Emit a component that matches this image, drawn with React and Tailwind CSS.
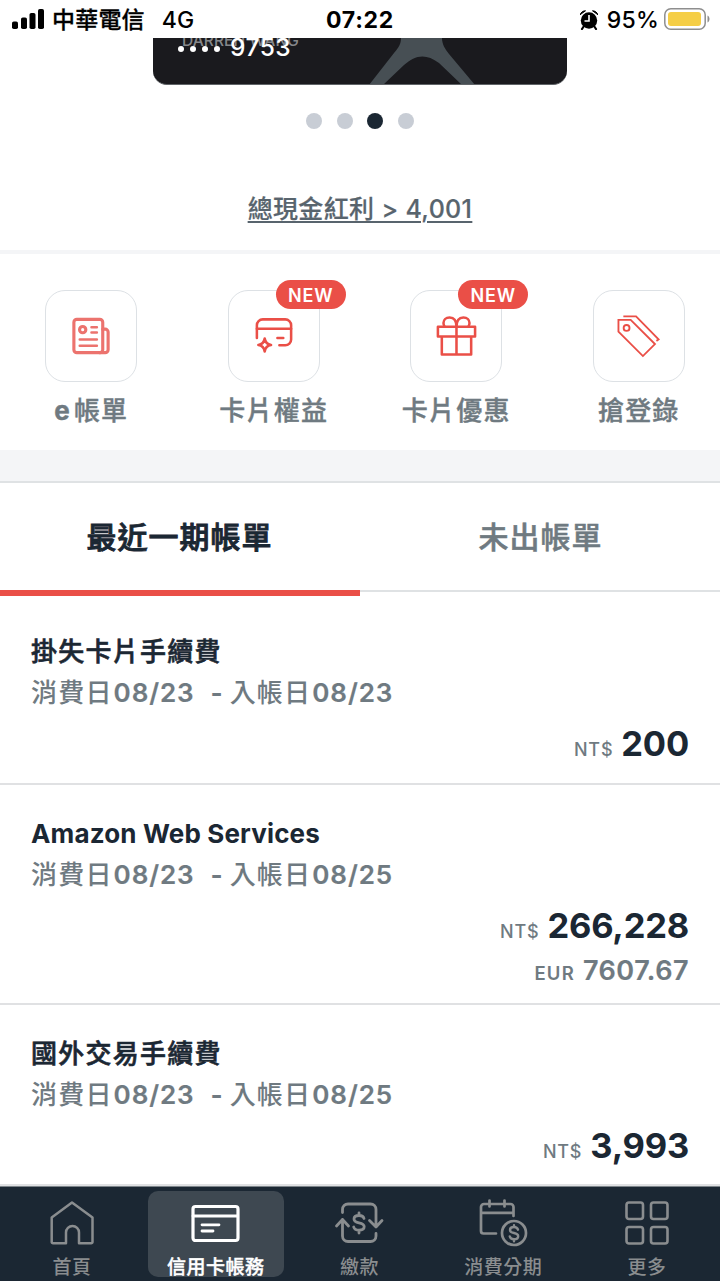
const shortcuts = [
  { label: "帳單", prefix: "e", icon: BillIcon },
  { label: "卡片權益", icon: BenefitIcon, isNew: true },
  { label: "卡片優惠", icon: GiftIcon, isNew: true },
  { label: "搶登錄", icon: TagIcon },
];

const transactions = [
  { name: "掛失卡片手續費", spent: "08/23", posted: "08/23", amount: "200", box: "h-[193px] pt-[39px]", title: "font-medium tracking-[1.25px] [-webkit-text-stroke:0.6px]" },
  { name: "Amazon Web Services", spent: "08/23", posted: "08/25", amount: "266,228", foreign: "7607.67", box: "h-[220px] pt-7", title: "font-bold tracking-[0.15px]" },
  { name: "國外交易手續費", spent: "08/23", posted: "08/25", amount: "3,993", box: "h-[181px] pt-7", title: "font-medium tracking-[1.25px] [-webkit-text-stroke:0.6px]" },
];

const navItems = [
  { label: "首頁", icon: HomeIcon },
  { label: "信用卡帳務", icon: CardIcon, active: true },
  { label: "繳款", icon: PayIcon },
  { label: "消費分期", icon: InstallmentIcon },
  { label: "更多", icon: MoreIcon },
];

function BillIcon() {
  return (
    <svg width="92" height="92" viewBox="0 0 92 92" fill="none" stroke="#ec736e" strokeWidth="3.2" strokeLinecap="round" strokeLinejoin="round">
      <rect x="28.5" y="29" width="29.5" height="34" rx="3" />
      <path d="M58 39h2.5a3 3 0 0 1 3 3v18a3 3 0 0 1-3 3H55" />
      <circle cx="37.500" cy="39.500" r="3.200" />
      <path d="M46.500 37h5.500M46.500 42.500h5.500M34.500 49.500h17.500M34.500 56h17.500" strokeWidth="2.600" />
    </svg>
  );
}

function BenefitIcon() {
  return (
    <svg width="92" height="92" viewBox="0 0 92 92" fill="none" stroke="#ea4f47" strokeWidth="2.6" strokeLinecap="round" strokeLinejoin="round">
      <path d="M28.500 48V35a6 6 0 0 1 6-6h23a6 6 0 0 1 6 6V49.500a6 6 0 0 1-6 6H51.500" />
      <path d="M28.500 38.500h35M49.500 48h6" />
      <path d="M36.500 48.500c.6 4 2.500 6 6.500 6.700c-4 .6-5.900 2.600-6.500 6.600c-.6-4-2.500-6-6.500-6.600c4-.7 5.900-2.700 6.500-6.700z" />
    </svg>
  );
}

function GiftIcon() {
  return (
    <svg width="92" height="92" viewBox="0 0 92 92" fill="none" stroke="#ea4f47" strokeWidth="2.6" strokeLinejoin="round">
      <path d="M27.500 36.500h38v10h-38zM31.500 46.500h30v18.500h-30zM46.500 36.500V65" />
      <path d="M46.500 36.500c0-6-2.500-9.500-7-9.500c-4 0-6.300 2.700-6.300 5.800c0 1.500.4 2.700 1.200 3.700M46.500 36.500c0-6 2.500-9.500 7-9.500c4 0 6.300 2.700 6.300 5.800c0 1.500-.4 2.700-1.200 3.700" />
    </svg>
  );
}

function TagIcon() {
  return (
    <svg width="92" height="92" viewBox="0 0 92 92" fill="none" stroke="#ea4f47" strokeWidth="1.9">
      <path d="M25 29.500h12.500l24.800 24.800l-12.300 12.200l-25-25z" />
      <path d="M30 26h13l23 23.500l-2.200 1.500" />
      <circle cx="33.300" cy="37.700" r="3" />
    </svg>
  );
}

function HomeIcon() {
  return (
    <svg className="shrink-0" width="50" height="50" viewBox="0 0 50 50" fill="none" stroke="currentColor" strokeWidth="2.500" strokeLinejoin="round">
      <path d="M25 5.500L45.500 20.500V45a1.300 1.300 0 0 1-1.300 1.300H32V35.500a6.500 6.500 0 0 0-13 0v10.800H6a1.300 1.300 0 0 1-1.300-1.300V20.500z" />
    </svg>
  );
}

function CardIcon() {
  return (
    <svg className="shrink-0" width="50" height="50" viewBox="0 0 50 50" fill="none" stroke="currentColor" strokeWidth="3.2" strokeLinecap="round">
      <rect x="2" y="9.500" width="45" height="34" rx="2.500" />
      <path d="M2 19h44.500M11 27.800h17M11 34h11" strokeWidth="2.800" />
    </svg>
  );
}

function PayIcon() {
  return (
    <svg className="shrink-0" width="50" height="50" viewBox="0 0 50 50" fill="none" stroke="currentColor" strokeWidth="2.800" strokeLinecap="round" strokeLinejoin="round">
      <path d="M8.500 15.500v-3A5.500 5.500 0 0 1 14 7h22.500a5.500 5.500 0 0 1 5.500 5.500V29.500M35.500 23.500l6.500 6.500l6-6.500" />
      <path d="M42 36.500v2.500a5.500 5.500 0 0 1-5.500 5.500H14A5.500 5.500 0 0 1 8.500 39V22.500M2.500 29l6-6.500l6 6.500" />
      <path d="M30 21.500c-.5-2-2.400-3-5-3c-3 0-5 1.400-5 3.500c0 2.500 2 3.200 5 3.800c3 .6 5.200 1.400 5.200 3.800c0 2.200-2.200 3.600-5.200 3.600c-2.700 0-4.800-1.200-5.300-3.200M25 16v2.500M25 33.500V36" />
    </svg>
  );
}

function InstallmentIcon() {
  return (
    <svg className="shrink-0" width="50" height="50" viewBox="0 0 50 50" fill="none" stroke="currentColor" strokeWidth="2.700" strokeLinecap="round">
      <path d="M18 36.500H5.500A2.500 2.500 0 0 1 3 34V10a3 3 0 0 1 3-3h26.500a3 3 0 0 1 3 3v9M3 15.800h32.500M11.500 3.500v6M26.500 3.500v6" />
      <circle cx="36" cy="36" r="12" />
      <path d="M40 32.700c-.5-1.700-2-2.700-4-2.700c-2.400 0-4 1.200-4 2.900c0 2 1.600 2.600 4 3.100c2.400.5 4.200 1.200 4.200 3.200c0 1.800-1.800 3-4.200 3c-2.200 0-3.800-1-4.200-2.700M36 28.200v1.800M36 42.200v2" strokeWidth="2.400" />
    </svg>
  );
}

function MoreIcon() {
  return (
    <svg className="shrink-0" width="50" height="50" viewBox="0 0 50 50" fill="none" stroke="currentColor" strokeWidth="2.600">
      <rect x="4.500" y="5.500" width="16.500" height="16.500" rx="2.500" />
      <rect x="29" y="5.500" width="16.500" height="16.500" rx="2.500" />
      <rect x="4.500" y="30" width="16.500" height="16.500" rx="2.500" />
      <rect x="29" y="30" width="16.500" height="16.500" rx="2.500" />
    </svg>
  );
}

function StatusBar() {
  return (
    <header className="grid h-[38px] shrink-0 grid-cols-[1fr_auto_1fr] items-center pt-[2px] text-[23px] leading-none text-black">
      <div className="flex items-center pl-3 font-medium">
        <svg width="32" height="22" viewBox="0 0 32 22">
          <rect x="0" y="12.500" width="6" height="7.500" rx="1.800" />
          <rect x="9" y="8.500" width="6" height="11.500" rx="1.800" />
          <rect x="17.500" y="4" width="6" height="16" rx="1.800" />
          <rect x="26" y="0" width="6" height="20" rx="1.800" />
        </svg>
        <span className="ml-[8px] tracking-[0.2px] [-webkit-text-stroke:0.3px]">中華電信</span>
        <span className="ml-[17px] tracking-[0.2px]">4G</span>
      </div>
      <div className="font-bold tracking-[0.7px]">07:22</div>
      <div className="flex items-center justify-end pr-[10px]">
        <svg className="-mt-px" width="18" height="20" viewBox="0 0 18 20">
          <circle cx="9" cy="10.500" r="8.200" />
          <path d="M4 16l-2 3M14 16l2 3" stroke="black" strokeWidth="2.200" strokeLinecap="round" />
          <path d="M0 4.800C.8 2.500 2.800.800 5.500.800zM18 4.800C17.200 2.500 15.200.800 12.500.800z" stroke="black" strokeWidth="1" />
          <path d="M9 5v6H4.500" fill="none" stroke="white" strokeWidth="1.600" />
        </svg>
        <span className="ml-[9px] font-medium tracking-[0.2px]">95%</span>
        <svg className="-mt-[2px] ml-[5px]" width="46" height="22" viewBox="0 0 46 22" fill="none">
          <rect x="0.800" y="0.800" width="40.400" height="20.400" rx="6" stroke="#8e8e8e" strokeWidth="1.500" />
          <rect x="4" y="4" width="33" height="14" rx="3" fill="#f5ce46" />
          <path d="M43.500 7.500v7c1.300-.6 2-2 2-3.500s-.7-2.900-2-3.500z" fill="#8e8e8e" />
        </svg>
      </div>
    </header>
  );
}

function CreditCard() {
  return (
    <div className="relative mx-auto h-[47px] w-[414px] shrink-0 overflow-hidden rounded-b-[14px] border-b border-[#606468] bg-[#1a1a1e] text-white">
      <svg className="absolute left-[216px] top-0" width="106" height="47" viewBox="0 0 106 47">
        <path d="M32 0H73C73 6 76 11 80 16L106 47H93L70 25C57 15 46 17 35 27L14 47H0L25 15C30 9 32 6 32 0Z" fill="#474f54" />
      </svg>
      <div className="absolute -top-[7px] left-[29px] text-[15.5px] font-medium leading-5 tracking-[0.1px] text-[#85878a]">DARREN WANG</div>
      <div className="absolute -top-[6px] left-[25px] flex items-center text-[24.5px] font-medium leading-[30px] tracking-[0.5px]">
        <span className="mt-[3px] flex gap-[6px] pr-[10px]">
          <i className="size-[6px] rounded-full bg-white" />
          <i className="size-[6px] rounded-full bg-white" />
          <i className="size-[6px] rounded-full bg-white" />
          <i className="size-[6px] rounded-full bg-white" />
        </span>
        9753
      </div>
    </div>
  );
}

function Shortcut({ item }) {
  const Icon = item.icon;
  return (
    <button className="flex w-[182.5px] shrink-0 flex-col items-center">
      <span className="relative flex size-[92px] items-center justify-center rounded-[20px] border-[1.5px] border-[#dde1e5]">
        <Icon />
        {item.isNew && (
          <span className="absolute -right-[27px] -top-[11px] flex h-[29px] w-[70px] items-center justify-center rounded-full bg-[#ea4f47] pt-px text-[18px] font-semibold tracking-[0.8px] text-white">
            NEW
          </span>
        )}
      </span>
      <span className="mt-[11px] text-[26px] font-medium leading-9 tracking-[1.2px] text-[#6f7a81] [-webkit-text-stroke:0.4px]">
        {item.prefix && <b className="mr-[3px] font-bold">{item.prefix}</b>}
        {item.label}
      </span>
    </button>
  );
}

function Transaction({ item }) {
  return (
    <li className={`${item.box} border-b-2 border-[#e0e1e3] px-[31px]`}>
      <h3 className={`${item.title} text-[26px] leading-[41px] text-[#1b2733]`}>{item.name}</h3>
      <p className="flex text-[26px] font-medium leading-[41px] text-[#6f7a81]">
        <span className="tracking-[1.2px]">消費日</span>
        <b className="ml-px font-semibold tracking-[0.9px] [-webkit-text-stroke:0.2px]">{item.spent}</b>
        <b className="ml-4 mr-[7px] font-bold">-</b>
        <span className="tracking-[1.2px]">入帳日</span>
        <b className="ml-px font-semibold tracking-[0.9px] [-webkit-text-stroke:0.2px]">{item.posted}</b>
      </p>
      <div className="mt-2 flex items-baseline justify-end gap-2 leading-[45px]">
        <span className="text-[18px] font-medium tracking-[0.8px] text-[#6f7a81]">NT$</span>
        <span className="text-[34.5px] font-bold tracking-[-0.2px] text-[#1b2733]">{item.amount}</span>
      </div>
      {item.foreign && (
        <div className="-mt-[6px] flex items-baseline justify-end gap-2 leading-[45px] text-[#6f7a81]">
          <span className="text-[18.5px] font-semibold tracking-[1.2px]">EUR</span>
          <span className="text-[27px] font-semibold tracking-[0.5px] [-webkit-text-stroke:0.2px]">{item.foreign}</span>
        </div>
      )}
    </li>
  );
}

function BottomNav() {
  return (
    <nav className="flex h-[95px] shrink-0 border-t border-[#7d848a] bg-[#1b2733] pr-px pt-1">
      {navItems.map(({ label, icon: Icon, active }) => (
        <button
          key={label}
          className={`mx-1 flex h-[86px] flex-1 flex-col items-center rounded-[10px] pt-[6px] ${active ? "bg-[#3e4851] text-white [-webkit-text-stroke:0.4px]" : "text-[#8a8d8f]"}`}
        >
          <Icon />
          <span className="mt-[9px] text-[19px] font-medium leading-6 tracking-[0.5px]">{label}</span>
        </button>
      ))}
    </nav>
  );
}

export default function App() {
  return (
    <main className="flex h-[1281px] w-[720px] flex-col overflow-hidden bg-white font-['Inter','Noto_Sans_CJK_TC',sans-serif]">
      <StatusBar />
      <CreditCard />
      <div className="mx-auto mt-7 flex gap-[14.7px]">
        <span className="size-4 rounded-full bg-[#c8cdd5]" />
        <span className="size-4 rounded-full bg-[#c8cdd5]" />
        <span className="size-4 rounded-full bg-[#1b2733]" />
        <span className="size-4 rounded-full bg-[#c8cdd5]" />
      </div>
      <a className="mx-auto mt-[62px] h-[59px] text-[25px] font-medium leading-9 tracking-[0.35px] text-[#58646d] underline decoration-2 underline-offset-[3px] [-webkit-text-stroke:0.2px]">
        總現金紅利 &gt; 4,001
      </a>

      <section className="flex h-[200px] w-[730px] shrink-0 border-t-4 border-[#f4f5f7] pt-9">
        {shortcuts.map((item) => (
          <Shortcut key={item.label} item={item} />
        ))}
      </section>
      <div className="h-[33px] shrink-0 border-b-2 border-[#dfe2e4] bg-[#f4f5f7]" />

      <div className="grid h-[109px] shrink-0 grid-cols-2 border-b-2 border-[#dfe2e4] text-[30px] tracking-[1px]">
        <button className="relative pr-px pt-[2px] font-medium text-[#1b2733] [-webkit-text-stroke:0.9px]">
          最近一期帳單
          <span className="absolute inset-x-0 -bottom-[6px] h-[6px] bg-[#ea4f47]" />
        </button>
        <button className="pl-px pt-[2px] font-medium text-[#6f7a81] [-webkit-text-stroke:0.5px]">未出帳單</button>
      </div>

      <ul className="shrink-0">
        {transactions.map((item) => (
          <Transaction key={item.name} item={item} />
        ))}
      </ul>
      <BottomNav />
    </main>
  );
}
